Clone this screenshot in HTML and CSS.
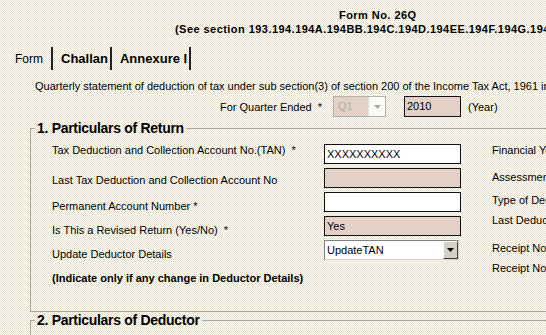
FILE: index.html
```html
<!DOCTYPE html>
<html lang="en">
<head>
    <meta charset="UTF-8">
    <meta name="viewport" content="width=device-width, initial-scale=1.0">
    <title>Form No. 26Q</title>
    <link rel="stylesheet" href="styles.css">
</head>
<body>
<div class="page">
    <div class="head">
        <div class="form-no">Form No. 26Q</div>
        <div class="see">(See section 193.194.194A.194BB.194C.194D.194EE.194F.194G.194H.194I.194J.194LA.195.196A.196B.196C.196D and rule 31A)</div>
    </div>

    <div class="tabs">
        <span class="tab active">Form</span><span class="sep"></span>
        <span class="tab">Challan</span><span class="sep"></span>
        <span class="tab">Annexure I</span><span class="sep"></span>
    </div>

    <div class="panel">
        <p class="intro">Quarterly statement of deduction of tax under sub section(3) of section 200 of the Income Tax Act, 1961 in respect of payments other than salary</p>

        <div class="quarter">
            <span class="q-label">For Quarter Ended &nbsp;*</span>
            <div class="pick off">
                <span class="pick-text">Q1</span>
                <span class="pick-btn">
                    <svg width="7" height="4" viewBox="0 0 7 4"><path d="M0 0h7L3.5 4z" fill="#a8a8a8"/></svg>
                </span>
            </div>
            <div class="field off year">2010</div>
            <span class="year-label">(Year)</span>
        </div>

        <fieldset class="group">
            <legend>1. Particulars of Return</legend>
            <div class="cols">
                <div class="labels">
                    <div class="lbl">Tax Deduction and Collection Account No.(TAN) &nbsp;*</div>
                    <div class="lbl">Last Tax Deduction and Collection Account No</div>
                    <div class="lbl">Permanent Account Number *</div>
                    <div class="lbl">Is This a Revised Return (Yes/No) &nbsp;*</div>
                    <div class="lbl">Update Deductor Details</div>
                    <div class="lbl note">(Indicate only if any change in Deductor Details)</div>
                </div>
                <div class="controls">
                    <div class="field">XXXXXXXXXX</div>
                    <div class="field off"></div>
                    <div class="field"></div>
                    <div class="field off">Yes</div>
                    <div class="pick">
                        <span class="pick-text">UpdateTAN</span>
                        <span class="pick-btn raised">
                            <svg width="7" height="4" viewBox="0 0 7 4"><path d="M0 0h7L3.5 4z" fill="#000"/></svg>
                        </span>
                    </div>
                </div>
                <div class="side">
                    <div>Financial Year *</div>
                    <div>Assessment Year</div>
                    <div>Type of Deductor *</div>
                    <div>Last Deductor Type</div>
                    <div>Receipt No of original statement</div>
                    <div>Receipt No of previous statement</div>
                </div>
            </div>
        </fieldset>

        <fieldset class="group next">
            <legend>2. Particulars of Deductor</legend>
        </fieldset>
    </div>
</div>
</body>
</html>
```

FILE: styles.css
```css
html, body {
    margin: 0;
    overflow: hidden;
}

body {
    font-family: "Liberation Sans", Arial, sans-serif;
    font-size: 11px;
    color: #000;
    background: repeating-conic-gradient(#fff 0 25%, #e2dfc6 0 50%) 0 0 / 2px 2px;
}

.page {
    width: 1000px;
}

/* heading */
.head {
    font-weight: bold;
    font-size: 11px;
    line-height: 12px;
    letter-spacing: 0.45px;
    white-space: nowrap;
}

.form-no {
    margin-top: 9px;
    padding-left: 339px;
}

.see {
    margin-top: 2px;
    padding-left: 175px;
}

/* tabs */
.tabs {
    display: flex;
    align-items: center;
    height: 23px;
    margin-top: 12px;
    padding-left: 15px;
}

.tab {
    font-size: 13px;
    font-weight: bold;
    margin: 0 2px 0 8px;
}

.tab.active {
    font-size: 12px;
    font-weight: normal;
    margin: 0 8px 0 0;
}

.sep {
    width: 2px;
    height: 23px;
    background-color: #222;
}

/* panel */
.intro {
    margin: 10px 0 0 35px;
    line-height: 13px;
    white-space: nowrap;
}

.quarter {
    display: flex;
    align-items: center;
    height: 21px;
    margin-top: 3px;
    padding-left: 220px;
}

.q-label {
    width: 113px;
}

.year-label {
    margin-left: 7px;
}

/* inputs */
.field {
    box-sizing: border-box;
    width: 137px;
    height: 20px;
    margin-bottom: 4px;
    padding: 0 2px;
    border: 1px solid #111;
    background-color: #fff;
    line-height: 18px;
}

.off {
    background: repeating-conic-gradient(#f2d2cc 0 25%, #d4cfc0 0 50%) 0 0 / 2px 2px;
}

.quarter .year {
    width: 57px;
    height: 21px;
    margin: 0 0 0 18px;
    line-height: 19px;
}

.pick {
    box-sizing: border-box;
    display: flex;
    width: 135px;
    height: 20px;
    border: 1px solid;
    border-color: #808080 #d4d0c8 #d4d0c8 #808080;
    background-color: #fff;
}

.pick-text {
    flex: 1;
    padding-left: 2px;
    line-height: 18px;
}

.pick-btn {
    display: flex;
    align-items: center;
    justify-content: center;
    width: 15px;
    background-color: #fafaf6;
}

.pick-btn.raised {
    box-sizing: border-box;
    border: 1px solid;
    border-color: #fff #404040 #404040 #fff;
    background-color: #d4d0c8;
}

.quarter .pick {
    width: 53px;
    height: 21px;
    border: 1px solid #b4b2a8;
}

.quarter .pick-text {
    color: #b0aea4;
    line-height: 19px;
    padding-left: 4px;
}

.quarter .pick-btn {
    width: 16px;
    border-left: 1px solid #e0e0d8;
}

/* fieldsets */
.group {
    margin: 3px 0 0 30px;
    padding: 7px 0 26px 21px;
    min-width: 0;
    border: 1px solid #aaa79a;
}

.group legend {
    font-size: 14px;
    font-weight: bold;
    line-height: 17px;
    letter-spacing: -0.3px;
    padding: 0 2px;
    margin-left: -17px;
}

.group.next {
    margin-top: 0;
}

.cols {
    display: flex;
    align-items: flex-start;
}

.labels {
    width: 272px;
}

.lbl {
    height: 24px;
    line-height: 13px;
    white-space: nowrap;
}

.lbl:nth-child(1) {
    height: 30px;
}

.lbl:nth-child(2) {
    height: 26px;
}

.lbl.note {
    height: 13px;
    font-weight: bold;
}

.side {
    margin-left: 31px;
    line-height: 13px;
    white-space: nowrap;
}

.side div:nth-child(1) { height: 27px; }
.side div:nth-child(2) { height: 23px; }
.side div:nth-child(3) { height: 20px; }
.side div:nth-child(4) { height: 28px; }
.side div:nth-child(5) { height: 20px; }
```
